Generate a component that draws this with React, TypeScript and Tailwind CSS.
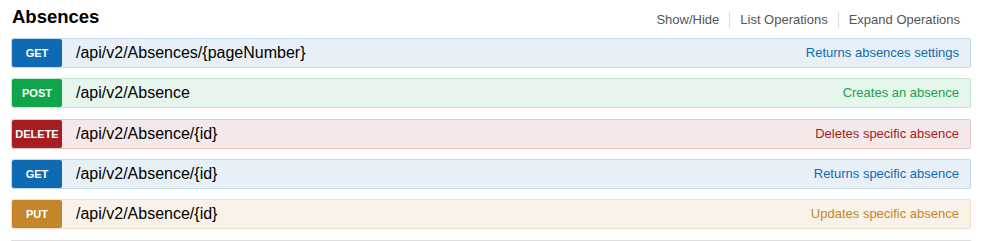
import React from "react";

type Op = {
  method: string;
  path: string;
  desc: string;
  row: string;
  badge: string;
  text: string;
};

const ops: Op[] = [
  {
    method: "GET",
    path: "/api/v2/Absences/{pageNumber}",
    desc: "Returns absences settings",
    row: "bg-[#e7f0f7] border-[#c3d9ec]",
    badge: "bg-[#0f6ab4]",
    text: "text-[#0f6ab4]",
  },
  {
    method: "POST",
    path: "/api/v2/Absence",
    desc: "Creates an absence",
    row: "bg-[#e7f6ec] border-[#c3e8d1]",
    badge: "bg-[#10a54a]",
    text: "text-[#10a54a]",
  },
  {
    method: "DELETE",
    path: "/api/v2/Absence/{id}",
    desc: "Deletes specific absence",
    row: "bg-[#f5e8e8] border-[#e8c6c7]",
    badge: "bg-[#a41e22]",
    text: "text-[#a41e22]",
  },
  {
    method: "GET",
    path: "/api/v2/Absence/{id}",
    desc: "Returns specific absence",
    row: "bg-[#e7f0f7] border-[#c3d9ec]",
    badge: "bg-[#0f6ab4]",
    text: "text-[#0f6ab4]",
  },
  {
    method: "PUT",
    path: "/api/v2/Absence/{id}",
    desc: "Updates specific absence",
    row: "bg-[#f9f2e9] border-[#f0e0ca]",
    badge: "bg-[#c5862b]",
    text: "text-[#c5862b]",
  },
];

export default function App() {
  return (
    <div className="w-[986px] h-[241px] bg-white overflow-hidden font-['Liberation_Sans',Arial,sans-serif]">
      <div className="ml-[11px] w-[960px]">
        <div className="flex items-start justify-between h-[38px]">
          <h2 className="pl-px pt-[6px] text-[18.5px] leading-[22px] font-bold text-black">
            Absences
          </h2>
          <ul className="flex pt-[12px] pr-[11px] text-[13px] leading-[16px] text-[#555]">
            <li className="px-[10px] border-r border-[#ddd]">Show/Hide</li>
            <li className="px-[10px] border-r border-[#ddd]">List Operations</li>
            <li className="pl-[10px]">Expand Operations</li>
          </ul>
        </div>
        <div className="flex flex-col">
          {ops.map((op, i) => (
            <div
              key={i}
              className={`flex items-stretch h-[30px] border rounded-[2px] mb-[10px] ${op.row} ${i === 2 ? "mt-px" : ""}`}
            >
              <div
                className={`w-[50px] flex items-center justify-center rounded-[2px] text-white text-[11px] font-bold ${op.badge}`}
              >
                {op.method}
              </div>
              <div className="flex-1 flex items-center pl-[14px] text-[16px] text-black">
                {op.path}
              </div>
              <div className={`flex items-center pr-[11px] text-[13px] ${op.text}`}>
                {op.desc}
              </div>
            </div>
          ))}
          <div className="border-t border-[#ddd] mt-px" />
        </div>
      </div>
    </div>
  );
}
